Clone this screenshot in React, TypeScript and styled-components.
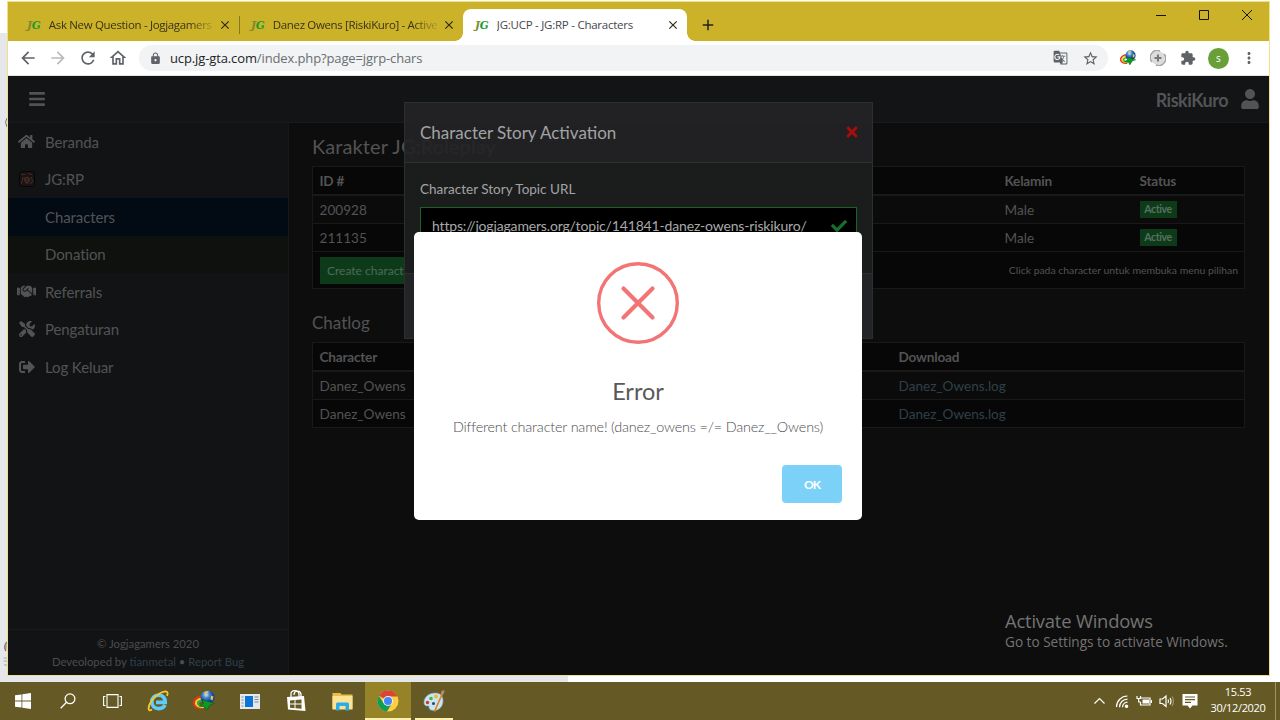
import { useState } from "react";
import type { ReactNode } from "react";
import {
  FaBars,
  FaCheck,
  FaHandshake,
  FaHome,
  FaSignOutAlt,
  FaTimes,
  FaTools,
  FaUser,
} from "react-icons/fa";
import {
  MdAdd,
  MdArrowBack,
  MdArrowForward,
  MdClose,
  MdExtension,
  MdGTranslate,
  MdLock,
  MdMoreVert,
  MdOutlineHome,
  MdRefresh,
  MdStarBorder,
} from "react-icons/md";
import styled, { createGlobalStyle } from "styled-components";

const uiFont = `"Open Sans", "Noto Sans", sans-serif`;
const pageFont = `Lato, Carlito, sans-serif`;

const GlobalStyle = createGlobalStyle`
  * {
    box-sizing: border-box;
  }
  body {
    margin: 0;
    overflow: hidden;
    font-family: ${uiFont};
  }
  svg {
    display: block;
    flex: none;
  }
`;

/* Desktop */

const Desktop = styled.div`
  width: 1280px;
  height: 720px;
  display: flex;
  flex-direction: column;
  position: relative;
  overflow: hidden;
  background: linear-gradient(#fff 33px, #e6e7eb 33px) 0 0 / 568px 100% no-repeat #fff;
`;

const Window = styled.div`
  width: 1263px;
  height: 675px;
  margin: 1px 0 6px 7px;
  border: 1px solid #f0e187;
  display: flex;
  flex-direction: column;
  flex: none;
`;

/* sliver of whatever sits behind the browser window */
const Behind = styled.svg`
  position: absolute;
  left: 2px;
  top: 114px;
`;

/* Browser */

const TitleBar = styled.div`
  height: 39px;
  padding: 7px 0 0 7px;
  display: flex;
  background: #ccb229;
`;

const Tab = styled.div<{ $active?: boolean }>`
  width: 224px;
  height: 32px;
  padding: 0 7px 0 12px;
  display: flex;
  align-items: center;
  position: relative;
  border-radius: 8px 8px 0 0;
  background: ${(props) => (props.$active ? "#fff" : "transparent")};
  color: ${(props) => (props.$active ? "#45484c" : "#37331a")};

  &::before,
  &::after {
    content: "";
    display: ${(props) => (props.$active ? "block" : "none")};
    position: absolute;
    bottom: 0;
    width: 8px;
    height: 8px;
  }
  &::before {
    left: -8px;
    background: radial-gradient(circle at 0 0, transparent 7.5px, #fff 8px);
  }
  &::after {
    right: -8px;
    background: radial-gradient(circle at 100% 0, transparent 7.5px, #fff 8px);
  }
`;

const Favicon = styled.span`
  width: 16px;
  margin-right: 6px;
  font: italic 700 10.5px/16px "DejaVu Serif", serif;
  letter-spacing: -0.3px;
  color: #1c9a2e;

  i {
    color: #7d8b2d;
  }
`;

const TabTitle = styled.span<{ $spacing: string; $fade?: boolean }>`
  width: 166px;
  margin-top: -1px;
  overflow: hidden;
  white-space: nowrap;
  font-size: 11.5px;
  letter-spacing: ${(props) => props.$spacing};
  mask-image: ${(props) =>
    props.$fade ? "linear-gradient(90deg, #000 140px, transparent 168px)" : "none"};
`;

const TabClose = styled(MdClose)`
  margin-left: 5px;
  color: #2a2812;
`;

const TabDivider = styled.div`
  width: 1px;
  height: 18px;
  margin: 7px -1px 0 0;
  background: #867721;
`;

const NewTab = styled(MdAdd)`
  margin: 7px 0 0 12px;
  color: #222;
`;

const WindowControls = styled.div`
  margin: -4px 16px 0 auto;
  height: 20px;
  display: flex;
  align-items: center;
  gap: 31px;
`;

const Toolbar = styled.div`
  height: 35px;
  padding: 0 10px;
  display: flex;
  align-items: center;
  background: #fff;
  border-bottom: 1px solid #e2e3e4;
  color: #5f6368;
`;

const NavButtons = styled.div`
  display: flex;
  gap: 10px;
  margin-right: 11px;

  svg:nth-child(2) {
    color: #b9bbbe;
  }
`;

const Omnibox = styled.div`
  flex: 1;
  height: 26px;
  padding: 0 9px 0 10px;
  display: flex;
  align-items: center;
  border-radius: 13px;
  background: #f1f3f4;
`;

const Url = styled.span`
  margin-left: 8px;
  flex: 1;
  font-size: 13px;
  letter-spacing: -0.12px;
  color: #6a6d71;

  b {
    font-weight: 400;
    color: #222427;
  }
`;

const OmniIcons = styled.div`
  display: flex;
  gap: 14px;
`;

const Extensions = styled.div`
  display: flex;
  align-items: center;
  gap: 14px;
  margin: 0 1px 0 12px;
`;

const Avatar = styled.div`
  width: 21px;
  height: 21px;
  margin: 0 -3px 0 -2px;
  border-radius: 50%;
  background: #689f38;
  color: #fff;
  font-size: 10px;
  line-height: 20px;
  text-align: center;
`;

/* Panel page */

const Page = styled.div`
  flex: 1;
  min-height: 0;
  display: flex;
  flex-direction: column;
  position: relative;
  font-family: ${pageFont};
  background: #0d0d0d;
  color: #525354;
`;

const PageHeader = styled.header`
  height: 47px;
  padding: 0 9px 0 20px;
  display: flex;
  align-items: center;
  background: #131416;
  border-bottom: 1px solid #191a1b;
`;

const UserName = styled.span`
  margin: 2px 12px 0 auto;
  font-size: 18px;
  font-weight: 700;
  letter-spacing: -0.5px;
`;

const PageBody = styled.div`
  flex: 1;
  min-height: 0;
  display: flex;
`;

const Sidebar = styled.nav`
  width: 281px;
  display: flex;
  flex-direction: column;
  background: #121315;
  border-right: 1px solid #171819;
`;

const MenuItem = styled.a<{ $tone?: string }>`
  height: 37.5px;
  display: flex;
  align-items: center;
  font-size: 15px;
  letter-spacing: -0.1px;
  background: ${(props) => props.$tone ?? "transparent"};
`;

const MenuIcon = styled.span`
  width: 37px;
  display: flex;
  justify-content: center;
`;

const SidebarFooter = styled.footer`
  margin-top: auto;
  height: 46px;
  padding-top: 5px;
  border-top: 1px solid #191a1b;
  font-size: 11.3px;
  line-height: 18px;
  text-align: center;
  color: #4b4c4d;
`;

const Link = styled.a`
  color: #304049;
`;

const Main = styled.main`
  flex: 1;
  padding: 9px 24px 0 23px;
`;

const Heading = styled.h2`
  margin: 0;
  height: 28px;
  font-size: 20px;
  font-weight: 400;
  line-height: 28px;
  letter-spacing: 0.1px;
`;

const SubHeading = styled(Heading)`
  height: 47px;
  padding-top: 20px;
  font-size: 17px;
  letter-spacing: 0;
`;

const Table = styled.div<{ $columns: string }>`
  margin-top: 6px;
  border: 1px solid #191919;
  font-size: 13.6px;
  --columns: ${(props) => props.$columns};
`;

const Row = styled.div<{ $dark?: boolean }>`
  height: 28px;
  padding: 0 6.5px;
  display: grid;
  grid-template-columns: var(--columns);
  align-items: center;
  background: ${(props) => (props.$dark ? "#070707" : "#0b0b0b")};

  & + & {
    border-top: 1px solid #191919;
  }
`;

const HeadRow = styled(Row)`
  font-weight: 700;
  letter-spacing: -0.2px;
  border-bottom: 1px solid #191919;
`;

const FootRow = styled.div`
  height: 37px;
  padding: 0 6px 0 6.5px;
  display: flex;
  align-items: center;
  justify-content: space-between;
  border-top: 1px solid #191919;
  background: #070707;
  font-size: 10.4px;
`;

const Badge = styled.span`
  width: 37px;
  height: 17px;
  justify-self: start;
  background: #0d3b19;
  color: #587060;
  font-size: 10.5px;
  font-weight: 700;
  line-height: 17px;
  letter-spacing: -0.4px;
  text-align: center;
`;

const CreateButton = styled.button`
  height: 27px;
  padding: 0 7.5px;
  border: 0;
  background: #0d3b19;
  color: #4f6a57;
  font: 12px ${pageFont};
`;

/* Story modal */

const Modal = styled.section`
  position: absolute;
  left: 396px;
  top: 26px;
  width: 469px;
  height: 237px;
  border: 1px solid #2c2e30;
  color: #a2a3a4;
`;

const ModalHeader = styled.div`
  height: 60px;
  padding: 0 12px 2px 15px;
  display: flex;
  align-items: center;
  justify-content: space-between;
  border-bottom: 1px solid #2d2f31;
  background: rgba(35, 36, 38, 0.93);
  font-size: 17px;
  line-height: 24px;
`;

const ModalTitle = styled.span`
  padding-top: 2px;
`;

const ModalBody = styled.div`
  height: 110px;
  padding: 16px 15px 0;
  background: #1b1d1c;
  font-size: 13.5px;
  line-height: 20px;
`;

const UrlField = styled.div`
  height: 37px;
  margin-top: 8px;
  padding: 0 9px 0 11px;
  display: flex;
  align-items: center;
  justify-content: space-between;
  border: 1px solid #1a6329;
  background: #000;
  font-size: 14px;
  letter-spacing: -0.16px;
  color: #a8a9aa;
`;

const ModalFooter = styled.div`
  height: 65px;
  border-top: 1px solid #2d2f31;
  background: #232426;
`;

/* Error alert */

const Alert = styled.div`
  position: absolute;
  left: 406px;
  top: 156px;
  width: 448px;
  height: 288px;
  padding: 30px 20px 17px;
  display: flex;
  flex-direction: column;
  align-items: center;
  border-radius: 5px;
  background: #fff;
`;

const AlertTitle = styled.h1`
  margin: 29px 0 0;
  font-size: 23.5px;
  font-weight: 400;
  line-height: 36px;
  color: #595959;
`;

const AlertText = styled.p`
  margin: 8px 0 0;
  font-size: 14.4px;
  font-weight: 300;
  line-height: 20px;
  letter-spacing: -0.18px;
  white-space: nowrap;
  color: #4c4c4c;
`;

const AlertButton = styled.button`
  width: 60px;
  height: 38px;
  margin-top: auto;
  align-self: flex-end;
  border: 0;
  border-radius: 4px;
  background: #7cd1f9;
  color: #fff;
  font: 700 12px ${pageFont};
  letter-spacing: -0.9px;
`;

const Watermark = styled.div`
  position: absolute;
  left: 1005px;
  top: 609px;
  color: #747474;
  font-size: 13.6px;
  line-height: 20px;
  white-space: nowrap;

  strong {
    display: block;
    font-size: 18.4px;
    font-weight: 400;
    line-height: 23px;
    letter-spacing: -0.2px;
  }
`;

/* Taskbar */

const Taskbar = styled.div`
  height: 38px;
  display: flex;
  background: #655a26;
  color: #fff;
`;

const SystemButtons = styled.div`
  display: grid;
  grid-template-columns: repeat(3, 45px);
  place-items: center;
`;

const TaskButton = styled.div<{ $active?: boolean; $running?: boolean }>`
  width: 46px;
  display: flex;
  align-items: center;
  justify-content: center;
  position: relative;

  &::before {
    content: "";
    position: absolute;
    inset: 0;
    background: ${(props) => (props.$active ? "#968327" : "transparent")};
  }
  &::after {
    content: "";
    display: ${(props) => (props.$active || props.$running ? "block" : "none")};
    position: absolute;
    bottom: 0;
    left: ${(props) => (props.$active ? 0 : 4)}px;
    right: ${(props) => (props.$active ? 0 : 4)}px;
    height: 2px;
    background: #fdf0ac;
  }
  svg {
    position: relative;
  }
`;

const Tray = styled.div`
  margin-left: auto;
  display: flex;
  align-items: center;
  gap: 7px;
`;

const Clock = styled.div`
  width: 66px;
  margin-top: -2px;
  font-size: 11px;
  line-height: 16px;
  letter-spacing: -0.35px;
  text-align: center;
`;

const ShowDesktop = styled.div`
  width: 5px;
  height: 100%;
  margin-left: -3px;
  border-left: 1px solid #9d9468;
`;

/* Drawings */

const Globe = ({ size }: { size: number }) => (
  <svg width={size} height={size} viewBox="0 0 22 22">
    <defs>
      <radialGradient id="globe" cx=".4" cy=".3">
        <stop offset="0" stopColor="#d6eefc" />
        <stop offset=".45" stopColor="#4b8ad6" />
        <stop offset="1" stopColor="#173c8c" />
      </radialGradient>
    </defs>
    <path d="M10 6.500C4 6.500 1 10 1 13s3 5.500 9 5" fill="none" stroke="#e8351f" strokeWidth="2.200" />
    <path d="M11 8.500c-5 0-8 2-8 4.500s3 4 8 4" fill="none" stroke="#f8d820" strokeWidth="2" />
    <path d="M12 10.500c-4 0-7 1-7 2.800s2.500 3 7 3" fill="none" stroke="#27b045" strokeWidth="2" />
    <circle cx="14.500" cy="7.500" r="7" fill="url(#globe)" />
    <path d="M11 2.500q2.500-2.500 5-1l-2 2-2 2zM18 5.500l2.500 1-1 4-2-1z" fill="#cfc869" />
    <path d="m9 9.500 12.500 4-4.500 1.500-3.500 5.500-2-4-5-.5 4-2.500z" fill="#0b9a26" stroke="#075d16" strokeWidth=".6" />
  </svg>
);

const Explorer = () => (
  <svg width="22" height="22" viewBox="0 0 22 22">
    <path
      d="M18 15c-1.200 2.400-3.400 3.600-6.200 3.600-4.300 0-7-2.800-7-6.600 0-3.900 2.800-6.900 6.900-6.900 4.300 0 6.700 3 6.500 7.300H9"
      fill="none"
      stroke="#5fcdf8"
      strokeWidth="3.800"
    />
    <path
      d="M5 19.500c-4.500 3-4.500-2.500-.5-8.500C9.500 3.500 18 .3 20 2c.9.800.7 2.300 0 4"
      fill="none"
      stroke="#f7c62e"
      strokeWidth="1.800"
    />
  </svg>
);

const Chrome = () => (
  <svg width="22" height="22" viewBox="0 0 22 22">
    <circle cx="11" cy="11" r="10.500" fill="#ffcd40" />
    <path d="M11 11 1.900 5.700a10.500 10.500 0 0 1 18.200 0L20.500 6.500H11z" fill="#db4437" />
    <path d="M1.900 5.700a10.500 10.500 0 0 0 8.100 15.800l5-8.200L6.500 13z" fill="#0f9d58" />
    <circle cx="11" cy="11" r="5" fill="#f2f2f2" />
    <circle cx="11" cy="11" r="4" fill="#4285f4" />
  </svg>
);

const Paint = () => (
  <svg width="22" height="22" viewBox="0 0 22 22">
    <path
      d="M12 3C6 3 1 7 1 12.500c0 2 1 3.500 3 3.500s2-.5 2 1.500 2 3 5 3c5 0 9-4 9-9.500s-3-8-8-8z"
      fill="#c9e5f4"
      stroke="#7fa9c4"
      strokeWidth=".6"
    />
    <circle cx="4.500" cy="12.500" r="1.700" fill="#d9342b" />
    <circle cx="8" cy="8.500" r="1.800" fill="#4fae45" />
    <circle cx="13" cy="6.500" r="2" fill="#f5b92c" />
    <circle cx="10.500" cy="13.500" r="1.500" fill="#23485d" />
    <path d="m11.500 21.500 7.500-17" stroke="#e2822c" strokeWidth="1.700" />
    <path d="M17.500 4.500 18.500 1l3-1-.5 3.500-2 2z" fill="#b98a62" />
  </svg>
);

const Folder = () => (
  <svg width="21" height="19" viewBox="0 0 21 19">
    <path d="M.5 1h8l1 1.500h11v14H.5z" fill="#e9bd48" />
    <path d="M.5 4h20v13.500H.5z" fill="#fbe294" />
    <path d="M4 18.500V12q0-1.500 1.500-1.500h10q1.500 0 1.500 1.500v6.500h-3.500V14h-6v4.500z" fill="#25aee8" />
  </svg>
);

const Store = () => (
  <svg width="22" height="24" viewBox="0 0 22 24">
    <path d="M6 8V5c0-4 7-5 8 0v3M9 6c0-5 6-5 7-1v3" fill="none" stroke="#fff" strokeWidth="1.300" />
    <path d="m2 8 17-1 1.500 15L3 20.500z" fill="#fff" />
    <path
      d="m5 11.500 4.500-.5v3.500H5zM10.500 11l6-.6v4.100h-6zM5 15.500h4.500v3.800L5 18.800zM10.500 15.500h6v4.300l-6-.5z"
      fill="#655a26"
    />
  </svg>
);

const News = () => (
  <svg width="20" height="15" viewBox="0 0 20 15">
    <path d="M0 0h20v15H0z" fill="#e6e9ec" />
    <path d="M5 2h8v11H5z" fill="#0b74d4" />
    <path d="M1.500 3h2M1.500 6h2M1.500 9h2M1.500 12h2M14.500 3h4M14.500 5.500h4M14.500 8h4" stroke="#7d8892" />
  </svg>
);

const WindowsLogo = () => (
  <svg width="16" height="16" viewBox="0 0 16 16" fill="#fff">
    <path d="m0 2.300 6.500-.9v6.100H0zM7.300 1.300 16 0v7.500H7.300zM0 8.400h6.500v6.200L0 13.700zM7.300 8.400H16V16l-8.700-1.200z" />
  </svg>
);

const Search = () => (
  <svg width="16" height="16" viewBox="0 0 16 16" fill="none" stroke="#fff" strokeWidth="1.300">
    <circle cx="10" cy="5.800" r="4.900" />
    <path d="M6.500 9.300.7 15.200" />
  </svg>
);

const TaskView = () => (
  <svg width="19" height="14" viewBox="0 0 19 14" fill="none" stroke="#fff" strokeWidth="1.100">
    <path d="M4 .6h11v12.800H4zM2.500 2.500H.6v9h1.900M16.500 2.500h1.900v9h-1.900" />
  </svg>
);

const TrayIcon = ({ width, children }: { width: number; children: ReactNode }) => (
  <svg width={width} height="16" viewBox={`0 0 ${width} 16`} fill="none" stroke="#fff" strokeWidth="1.200">
    {children}
  </svg>
);

const GameThumb = () => (
  <svg width="16" height="16" viewBox="0 0 16 16">
    <rect x=".5" y=".5" width="15" height="15" rx="2" fill="#1a1312" stroke="#070606" />
    <path d="M2.500 3.500h4M9 2.500l4 1M2.500 13l1.500-7M12.500 6l1 5-3 2" fill="none" stroke="#3d302b" />
    <path d="M5 7.500q3-3 6 0-1 5-3 5t-3-5z" fill="#33221e" stroke="#46322b" strokeWidth=".8" />
  </svg>
);

const Jg = () => (
  <Favicon>
    <i>J</i>G
  </Favicon>
);

const logs = [0, 1];

const App = () => {
  const [alertOpen, setAlertOpen] = useState(true);

  return (
    <>
      <GlobalStyle />
      <Desktop>
        <Behind width="5" height="554" fill="none">
          <path d="M5 4q-3 4 0 9" stroke="#6f7089" />
          <path d="M5 528q-4 4-1 9" stroke="#6c7f9c" strokeWidth="1.500" />
          <path d="M4 530v5" stroke="#d8772f" />
          <path d="M1.500 544H5M1.500 547H5M2 551h3" stroke="#a3a8b4" />
        </Behind>
        <Window>
          <TitleBar>
            <Tab>
              <Jg />
              <TabTitle $spacing="-0.33px" $fade>
                Ask New Question - Jogjagamers
              </TabTitle>
              <TabClose size={14} />
            </Tab>
            <TabDivider />
            <Tab>
              <Jg />
              <TabTitle $spacing="-0.35px" $fade>
                Danez Owens [RiskiKuro] - Active
              </TabTitle>
              <TabClose size={14} />
            </Tab>
            <Tab $active>
              <Jg />
              <TabTitle $spacing="-0.25px">JG:UCP - JG:RP - Characters</TabTitle>
              <TabClose size={14} />
            </Tab>
            <NewTab size={18} />
            <WindowControls>
              <svg width="12" height="12" stroke="#151303">
                <path d="M1 6.500h10" />
              </svg>
              <svg width="12" height="12" fill="none" stroke="#151303">
                <path d="M1.500 1.500h9v9h-9z" />
              </svg>
              <svg width="12" height="12" stroke="#151303">
                <path d="m1 1 10 10M11 1 1 11" />
              </svg>
            </WindowControls>
          </TitleBar>
          <Toolbar>
            <NavButtons>
              <MdArrowBack size={20} />
              <MdArrowForward size={20} />
              <MdRefresh size={20} />
              <MdOutlineHome size={20} />
            </NavButtons>
            <Omnibox>
              <MdLock size={13} />
              <Url>
                <b>ucp.jg-gta.com</b>/index.php?page=jgrp-chars
              </Url>
              <OmniIcons>
                <MdGTranslate size={15} />
                <MdStarBorder size={17} />
              </OmniIcons>
            </Omnibox>
            <Extensions>
              <Globe size={16} />
              <svg width="16" height="16" viewBox="0 0 16 16">
                <circle cx="8" cy="8" r="7" fill="#dcdcdc" />
                <path d="M2 12a7 7 0 0 1 8-11M14 4a7 7 0 0 1-8 11" fill="none" stroke="#a4a4a4" strokeWidth="1.500" />
                <path d="M8 4.500v7M4.500 8h7" stroke="#777" strokeWidth="2" />
              </svg>
              <MdExtension size={16} />
              <Avatar>s</Avatar>
              <MdMoreVert size={18} />
            </Extensions>
          </Toolbar>

          <Page>
            <PageHeader>
              <FaBars size={18} />
              <UserName>RiskiKuro</UserName>
              <FaUser size={20} />
            </PageHeader>
            <PageBody>
              <Sidebar>
                <MenuItem>
                  <MenuIcon>
                    <FaHome size={17} />
                  </MenuIcon>
                  Beranda
                </MenuItem>
                <MenuItem>
                  <MenuIcon>
                    <GameThumb />
                  </MenuIcon>
                  JG:RP
                </MenuItem>
                <MenuItem $tone="#020b14">
                  <MenuIcon />
                  Characters
                </MenuItem>
                <MenuItem $tone="#0f110f">
                  <MenuIcon />
                  Donation
                </MenuItem>
                <MenuItem>
                  <MenuIcon>
                    <FaHandshake size={19} />
                  </MenuIcon>
                  Referrals
                </MenuItem>
                <MenuItem>
                  <MenuIcon>
                    <FaTools size={16} />
                  </MenuIcon>
                  Pengaturan
                </MenuItem>
                <MenuItem>
                  <MenuIcon>
                    <FaSignOutAlt size={16} />
                  </MenuIcon>
                  Log Keluar
                </MenuItem>
                <SidebarFooter>
                  © Jogjagamers 2020
                  <br />
                  Deveoloped by <Link>tianmetal</Link> • <Link>Report Bug</Link>
                </SidebarFooter>
              </Sidebar>

              <Main>
                <Heading>Karakter JG:Roleplay</Heading>
                <Table $columns="685px 135px 1fr">
                  <HeadRow $dark>
                    <span>ID #</span>
                    <span>Kelamin</span>
                    <span>Status</span>
                  </HeadRow>
                  <Row>
                    <span>200928</span>
                    <span>Male</span>
                    <Badge>Active</Badge>
                  </Row>
                  <Row $dark>
                    <span>211135</span>
                    <span>Male</span>
                    <Badge>Active</Badge>
                  </Row>
                  <FootRow>
                    <CreateButton>Create character</CreateButton>
                    <span>Click pada character untuk membuka menu pilihan</span>
                  </FootRow>
                </Table>

                <SubHeading as="h3">Chatlog</SubHeading>
                <Table $columns="579px 1fr">
                  <HeadRow $dark>
                    <span>Character</span>
                    <span>Download</span>
                  </HeadRow>
                  {logs.map((log) => (
                    <Row key={log} $dark={log === 1}>
                      <span>Danez_Owens</span>
                      <Link>Danez_Owens.log</Link>
                    </Row>
                  ))}
                </Table>
              </Main>
            </PageBody>

            <Modal>
              <ModalHeader>
                <ModalTitle>Character Story Activation</ModalTitle>
                <FaTimes size={16} color="#a80d0d" />
              </ModalHeader>
              <ModalBody>
                Character Story Topic URL
                <UrlField>
                  https://jogjagamers.org/topic/141841-danez-owens-riskikuro/
                  <FaCheck size={16} color="#17702a" />
                </UrlField>
              </ModalBody>
              <ModalFooter />
            </Modal>

            {alertOpen && (
              <Alert>
                <svg width="82" height="82" viewBox="0 0 82 82" fill="none" stroke="#f27474">
                  <circle cx="41" cy="41" r="39.300" strokeWidth="3.400" />
                  <path d="m26.500 26.500 29 29m0-29-29 29" strokeWidth="4.200" strokeLinecap="round" />
                </svg>
                <AlertTitle>Error</AlertTitle>
                <AlertText>Different character name! (danez_owens =/= Danez__Owens)</AlertText>
                <AlertButton onClick={() => setAlertOpen(false)}>OK</AlertButton>
              </Alert>
            )}
          </Page>
        </Window>

        <Taskbar>
          <SystemButtons>
            <WindowsLogo />
            <Search />
            <TaskView />
          </SystemButtons>
          <TaskButton>
            <Explorer />
          </TaskButton>
          <TaskButton>
            <Globe size={22} />
          </TaskButton>
          <TaskButton>
            <News />
          </TaskButton>
          <TaskButton>
            <Store />
          </TaskButton>
          <TaskButton>
            <Folder />
          </TaskButton>
          <TaskButton $active>
            <Chrome />
          </TaskButton>
          <TaskButton $running>
            <Paint />
          </TaskButton>
          <Tray>
            <TrayIcon width={15}>
              <path d="m1.500 10.500 5-5 5 5" />
            </TrayIcon>
            <TrayIcon width={14}>
              <path d="M1.500 14A11 11 0 0 1 12.500 3M4.500 14.200a8 8 0 0 1 8-8M7.500 14.200a5 5 0 0 1 5-5" />
              <circle cx="11.500" cy="13.200" r="1.200" fill="#fff" />
            </TrayIcon>
            <TrayIcon width={16}>
              <path d="M5 5h9v7H4.500V9M1 3v2.500h3.500V3M2.700 5.500V9h2" />
              <path d="M6.500 6.500H13v4H6.500z" fill="#fff" stroke="none" />
              <path d="M15.400 7v3" />
            </TrayIcon>
            <TrayIcon width={16}>
              <path d="M1 6h2.500L7 3v10.500L3.500 10.500H1zM9 6.500q1.200 1.700 0 3.500M11 5q2 3 0 6.500" />
              <path d="M13 3.500q3 4.500 0 9.500" stroke="#9d9468" />
            </TrayIcon>
            <TrayIcon width={16}>
              <path d="M.5 1h15v11.500h-5L8 15.500l-2.500-3h-5z" fill="#fff" stroke="none" />
              <path d="M3 4h10M3 6.700h10M3 9.300h6" stroke="#655a26" />
            </TrayIcon>
            <Clock>
              15.53
              <br />
              30/12/2020
            </Clock>
            <ShowDesktop />
          </Tray>
        </Taskbar>
        <Watermark>
          <strong>Activate Windows</strong>
          Go to Settings to activate Windows.
        </Watermark>
      </Desktop>
    </>
  );
};

export default App;
